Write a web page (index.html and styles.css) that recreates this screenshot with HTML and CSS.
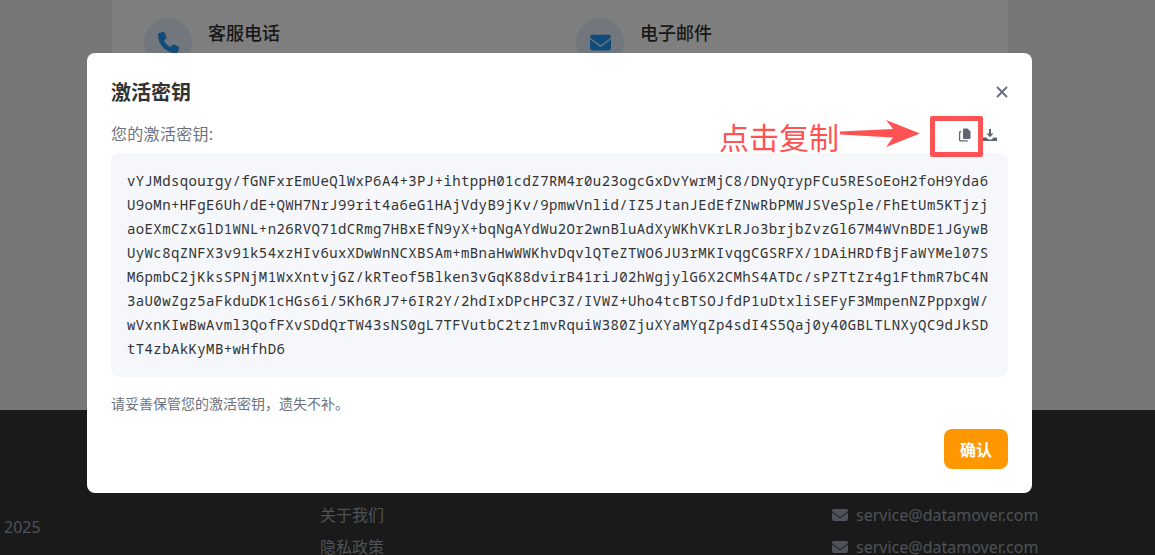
FILE: index.html
```html
<!DOCTYPE html>
<html lang="zh">
<head>
<meta charset="utf-8">
<title>激活密钥</title>
<link rel="stylesheet" href="styles.css">
</head>
<body>
<main class="page">
  <section class="contact">
    <div class="contact-grid">
      <div class="contact-item">
        <span class="contact-icon"><svg viewBox="0 0 512 512" width="21" height="21"><path fill="#2196f3" d="M164.900 24.600c-7.700-18.600-28-28.500-47.400-23.200l-88 24C12.100 30.200 0 46 0 64C0 311.400 200.600 512 448 512c18 0 33.800-12.100 38.600-29.500l24-88c5.300-19.400-4.600-39.700-23.200-47.400l-96-40c-16.300-6.800-35.200-2.100-46.300 11.600L304.700 368C234.300 334.700 177.300 277.700 144 207.300L193.300 167c13.700-11.200 18.400-30 11.600-46.300l-40-96z"/></svg></span>
        <span class="contact-title">客服电话</span>
      </div>
      <div class="contact-item">
        <span class="contact-icon"><svg viewBox="0 0 512 512" width="21" height="21"><path fill="#2196f3" d="M48 64C21.500 64 0 85.500 0 112c0 15.100 7.100 29.300 19.200 38.400L236.800 313.600c11.400 8.500 27 8.500 38.400 0L492.800 150.400c12.100-9.100 19.200-23.300 19.200-38.400c0-26.500-21.500-48-48-48H48zM0 176V384c0 35.300 28.700 64 64 64H448c35.300 0 64-28.700 64-64V176L294.400 339.200c-22.800 17.100-54 17.100-76.800 0L0 176z"/></svg></span>
        <span class="contact-title">电子邮件</span>
      </div>
    </div>
  </section>
  <footer class="footer">
    <div class="copyright">2025</div>
    <ul class="links">
      <li>关于我们</li>
      <li>隐私政策</li>
    </ul>
    <ul class="mails">
      <li><svg viewBox="0 0 512 512" width="16" height="16"><path fill="#9ca3af" d="M48 64C21.500 64 0 85.500 0 112c0 15.100 7.100 29.300 19.200 38.400L236.800 313.600c11.400 8.500 27 8.500 38.400 0L492.800 150.400c12.100-9.100 19.200-23.300 19.200-38.400c0-26.500-21.500-48-48-48H48zM0 176V384c0 35.300 28.700 64 64 64H448c35.300 0 64-28.700 64-64V176L294.400 339.200c-22.800 17.100-54 17.100-76.800 0L0 176z"/></svg>service@datamover.com</li>
      <li><svg viewBox="0 0 512 512" width="16" height="16"><path fill="#9ca3af" d="M48 64C21.500 64 0 85.500 0 112c0 15.100 7.100 29.300 19.200 38.400L236.800 313.600c11.400 8.500 27 8.500 38.400 0L492.800 150.400c12.100-9.100 19.200-23.300 19.200-38.400c0-26.500-21.500-48-48-48H48zM0 176V384c0 35.300 28.700 64 64 64H448c35.300 0 64-28.700 64-64V176L294.400 339.200c-22.800 17.100-54 17.100-76.800 0L0 176z"/></svg>service@datamover.com</li>
    </ul>
  </footer>
</main>
<div class="backdrop"></div>
<div class="modal">
  <header class="modal-head">
    <h2 class="modal-title">激活密钥</h2>
    <svg class="close" viewBox="0 0 12 12" width="12" height="12"><path d="M1.500 1.500l9 9M10.500 1.500l-9 9" stroke="#6b7280" stroke-width="2" stroke-linecap="round" fill="none"/></svg>
  </header>
  <div class="label-row">
    <span class="label">您的激活密钥:</span>
    <span class="tools">
      <svg viewBox="0 0 14 14" width="14" height="14"><path fill="#5f6672" d="M6 0.500h3.500l3 3v6.500a1 1 0 0 1-1 1H6a1 1 0 0 1-1-1V1.500a1 1 0 0 1 1-1z"/><path fill="none" stroke="#5f6672" stroke-width="1.300" d="M3.200 3.500h-.4a1.200 1.200 0 0 0-1.200 1.200v7a1.200 1.200 0 0 0 1.200 1.200h6.500v-.5"/></svg>
      <svg viewBox="0 0 14 14" width="14" height="14"><path fill="#5f6672" d="M6 1h2v4.500h2.500L7 9.200 3.500 5.500H6zM0 9.500h3.500L5.500 11.500h3l2-2H14V13H0z"/></svg>
    </span>
  </div>
  <pre class="key">vYJMdsqourgy/fGNFxrEmUeQlWxP6A4+3PJ+ihtppH01cdZ7RM4r0u23ogcGxDvYwrMjC8/DNyQrypFCu5RESoEoH2foH9Yda6
U9oMn+HFgE6Uh/dE+QWH7NrJ99rit4a6eG1HAjVdyB9jKv/9pmwVnlid/IZ5JtanJEdEfZNwRbPMWJSVeSple/FhEtUm5KTjzj
aoEXmCZxGlD1WNL+n26RVQ71dCRmg7HBxEfN9yX+bqNgAYdWu2Or2wnBluAdXyWKhVKrLRJo3brjbZvzGl67M4WVnBDE1JGywB
UyWc8qZNFX3v91k54xzHIv6uxXDwWnNCXBSAm+mBnaHwWWKhvDqvlQTeZTWO6JU3rMKIvqgCGSRFX/1DAiHRDfBjFaWYMel07S
M6pmbC2jKksSPNjM1WxXntvjGZ/kRTeof5Blken3vGqK88dvirB41riJ02hWgjylG6X2CMhS4ATDc/sPZTtZr4g1FthmR7bC4N
3aU0wZgz5aFkduDK1cHGs6i/5Kh6RJ7+6IR2Y/2hdIxDPcHPC3Z/IVWZ+Uho4tcBTSOJfdP1uDtxliSEFyF3MmpenNZPppxgW/
wVxnKIwBwAvml3QofFXvSDdQrTW43sNS0gL7TFVutbC2tz1mvRquiW380ZjuXYaMYqZp4sdI4S5Qaj0y40GBLTLNXyQC9dJkSD
tT4zbAkKyMB+wHfhD6</pre>
  <p class="note">请妥善保管您的激活密钥，遗失不补。</p>
  <div class="actions"><button class="confirm" type="button">确认</button></div>
  <span class="hint-text">点击复制</span>
  <svg class="hint-arrow" viewBox="0 0 80 27" width="80" height="27"><path fill="#ff5252" d="M0 11.500 L53 9 L46 0 L80 13.500 L46 27 L53 17.500 L0 14.500z"/></svg>
  <span class="hint-box"></span>
</div>
</body>
</html>
```
FILE: styles.css
```css
* { box-sizing: border-box; }
html, body { margin: 0; height: 100%; overflow: hidden; }
body { font-family: "Noto Sans", "Noto Sans CJK SC", sans-serif; background: #eeeeee; color: #333; }
ul { list-style: none; margin: 0; padding: 0; }

.page { height: 555px; display: flex; flex-direction: column; }
.contact { height: 410px; width: 896px; margin-left: 112px; background: #fff; flex: none; }
.contact-grid { display: grid; grid-template-columns: 432px 432px; padding: 18px 0 0 32px; }
.contact-item { display: flex; gap: 16px; align-items: flex-start; }
.contact-icon { width: 48px; height: 48px; border-radius: 50%; background: #e3eef8; display: flex; align-items: center; justify-content: center; }
.contact-title { font-size: 18px; font-weight: 500; line-height: 30px; color: #333; }

.footer { flex: 1; background: #343434; display: grid; grid-template-columns: 320px 512px 1fr; padding-top: 89px; color: #9ca3af; font-size: 16px; }
.copyright { margin-left: 4px; line-height: 56px; }
.links li { line-height: 32px; }
.mails li { line-height: 32px; display: flex; align-items: center; gap: 8px; }

.backdrop { position: fixed; inset: 0; background: rgba(0, 0, 0, .5); }
.modal { position: fixed; left: 87px; top: 53px; width: 945px; height: 440px; background: #fff; border-radius: 8px; padding: 24px; display: flex; flex-direction: column; }
.modal-head { display: flex; justify-content: space-between; align-items: center; height: 32px; margin-bottom: 12px; }
.modal-title { margin: 0; font-size: 20px; font-weight: 700; line-height: 32px; color: #333; }
.close { margin-top: -2px; }
.label-row { display: flex; justify-content: space-between; align-items: center; height: 24px; margin-bottom: 8px; }
.label { font-size: 16px; letter-spacing: .3px; color: #6b7280; }
.tools { display: flex; gap: 11px; align-items: center; margin: 3px 11px 0 0; }
.key { margin: 0; height: 224px; padding: 16px; background: #f5f7fb; border-radius: 8px; font-family: "Noto Sans Mono", "DejaVu Sans Mono", monospace; font-size: 14px; letter-spacing: .39px; line-height: 24px; color: #333; white-space: pre; overflow: hidden; }
.note { margin: 16px 0 0; font-size: 14px; color: #6b7280; line-height: 21px; }
.actions { display: flex; justify-content: flex-end; margin-top: auto; }
.confirm { width: 64px; height: 40px; border: 0; border-radius: 8px; background: #ff9800; color: #fff; font: 700 16px "Noto Sans CJK SC", sans-serif; }
.hint-text { position: absolute; left: 632px; top: 66px; font-size: 30px; line-height: 38px; color: #ff5252; }
.hint-arrow { position: absolute; left: 753px; top: 67px; }
.hint-box { position: absolute; left: 843px; top: 63px; width: 53px; height: 41px; border: 5px solid #ff5252; border-radius: 2px; }
```
